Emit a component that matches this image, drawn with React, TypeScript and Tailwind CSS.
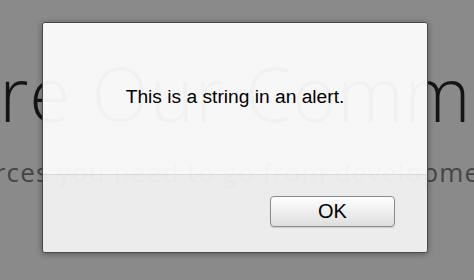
import React from "react";

const App = () => {
  return (
    <div className="relative w-[474px] h-[280px] overflow-hidden bg-[#8a8a8a]">
      {/* page behind the alert, dimmed */}
      <div className="flex flex-col">
        <h1
          className="mt-[56px] ml-[-189px] whitespace-nowrap text-[75px] leading-[75px] font-light tracking-[0.8px] text-[#141414]"
          style={{ fontFamily: '"Open Sans", sans-serif' }}
        >
          Explore Our Community
        </h1>
        <p
          className="mt-[29px] ml-[-173px] whitespace-nowrap text-[26px] leading-[24px] tracking-[1.2px] text-[#454545]"
          style={{ fontFamily: '"Open Sans", sans-serif' }}
        >
          All the resources you need to go from development to production
        </p>
      </div>

      {/* alert dialog */}
      <div className="absolute left-[42px] top-[22px] w-[386px] h-[231px] flex flex-col overflow-hidden rounded-[3px] border border-[#4a4a4a] shadow-[0_1px_6px_rgba(0,0,0,0.35)]">
        <div className="h-[151px] pt-[62px] bg-[#fdfdfd]/95 text-center">
          <span
            className="text-[19.2px] leading-[22px] text-black"
            style={{ fontFamily: '"Liberation Sans", Arial, sans-serif' }}
          >
            This is a string in an alert.
          </span>
        </div>
        <div className="flex-1 flex justify-end items-start border-t border-[#d8d8d8] bg-[#f1f1f1]/95 pt-[21px] pr-[32px]">
          <button
            className="w-[125px] h-[31px] rounded-[4px] border border-[#8c8c8c] bg-gradient-to-b from-white to-[#dedede] text-[20px] leading-[29px] text-black shadow-[0_1px_1px_rgba(0,0,0,0.15)]"
            style={{ fontFamily: '"Liberation Sans", Arial, sans-serif' }}
          >
            OK
          </button>
        </div>
      </div>
    </div>
  );
};

export default App;
